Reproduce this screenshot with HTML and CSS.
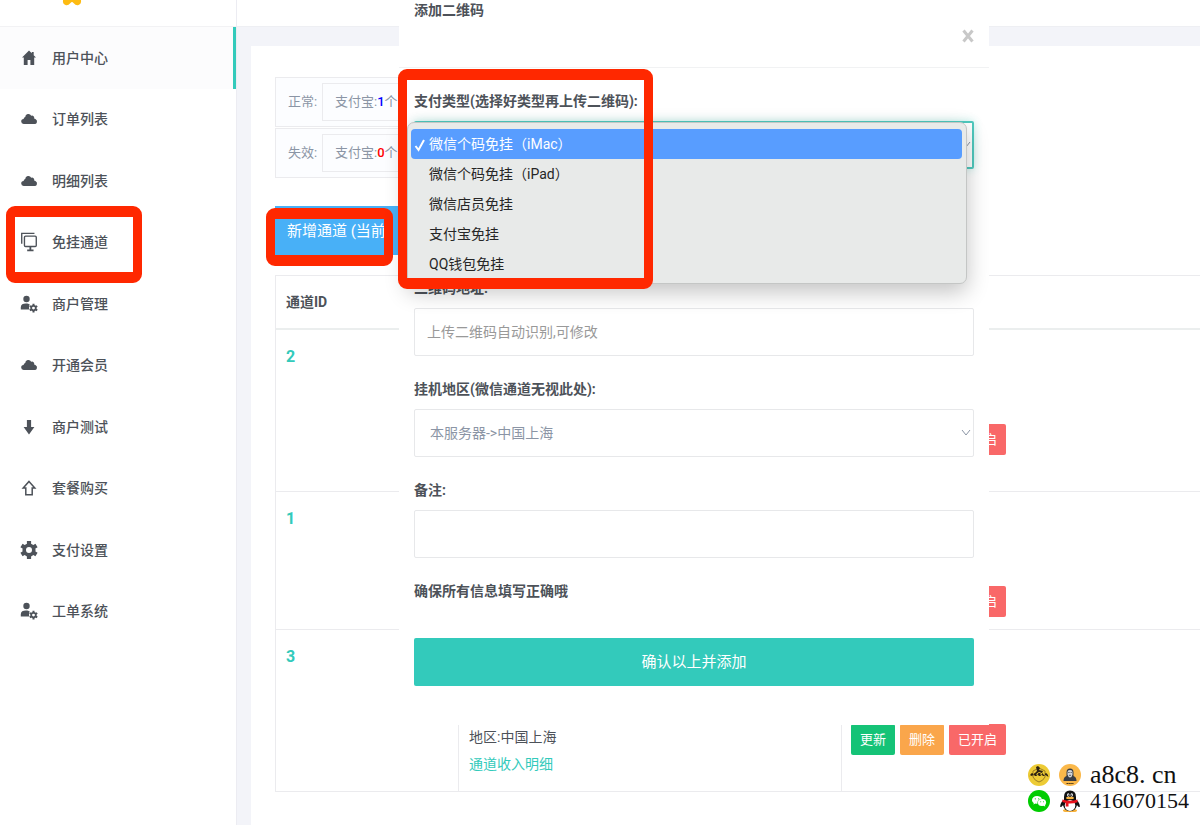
FILE: index.html
```html
<!DOCTYPE html>
<html lang="zh-CN">
<head>
<meta charset="utf-8">
<meta name="viewport" content="width=device-width, initial-scale=1">
<title>免挂通道</title>
<link rel="stylesheet" href="styles.css">
</head>
<body>
<svg class="defs" aria-hidden="true">
  <symbol id="cloud" viewBox="0 0 16 16"><path d="M2.800 13h10.600a2.500 2.500 0 0 0 1.300-4.700 2.200 2.200 0 0 0-1.600-.8 2.200 2.200 0 0 0-2.900-2.800A3.200 3.200 0 0 0 4.200 6 2.200 2.200 0 0 0 2.600 8 2.500 2.500 0 0 0 2.800 13z"/></symbol>
  <symbol id="users" viewBox="0 0 18 20"><circle cx="6.500" cy="5" r="3.200"/><path d="M.8 15.500v-2.300c0-2.600 2.200-3.700 5-3.700 1.900 0 3.300.4 4 1.100-.9 1.500-1 3.300-.4 4.900z"/><path d="M13.500 9.800v8.600M9.800 12l7.400 4.300M9.800 16.300l7.400-4.300" stroke="currentColor" stroke-width="2"/><circle cx="13.500" cy="14.100" r="2.300" fill="#fff" stroke="currentColor" stroke-width="1.700"/></symbol>
</svg>
<div class="app">
  <aside class="sidebar">
    <div class="brand">
      <svg width="20" height="6" viewBox="0 0 20 6" aria-hidden="true"><path d="M1 0h18q.6 4-2.500 5-2.500.8-5-2-.8-1-1.500-1t-1.500 1q-2.500 2.800-5 2Q.4 4 1 0z" fill="#fdbb12"/></svg>
    </div>
    <nav class="nav">
      <a class="nav-item nav-item--active" href="#"><svg class="icon" viewBox="0 0 16 16"><path d="M8 .4 1 7.600h1.800V15h3.800v-5h2.800v5h3.800V7.600H15l-2.300-2.400V2h-1.900v1.300z"/></svg>用户中心</a>
      <a class="nav-item" href="#"><svg class="icon"><use href="#cloud"/></svg>订单列表</a>
      <a class="nav-item" href="#"><svg class="icon"><use href="#cloud"/></svg>明细列表</a>
      <a class="nav-item" href="#"><svg class="icon icon--large" viewBox="0 0 18 22" fill="none" stroke="currentColor" stroke-width="1.500"><path d="M1 13V1.500h14"/><rect x="4" y="4.500" width="13" height="11.500" rx="1.200"/><path d="M10.500 16v4M7 20.300h7" stroke-width="2"/></svg>免挂通道<span class="marker marker--nav"></span></a>
      <a class="nav-item" href="#"><svg class="icon icon--large"><use href="#users"/></svg>商户管理</a>
      <a class="nav-item" href="#"><svg class="icon"><use href="#cloud"/></svg>开通会员</a>
      <a class="nav-item" href="#"><svg class="icon" viewBox="0 0 16 16"><path d="M5.900 1h4.200v7h3.300L8 15.500 2.600 8h3.300z"/></svg>商户测试</a>
      <a class="nav-item" href="#"><svg class="icon" viewBox="0 0 16 16" fill="none" stroke="currentColor" stroke-width="1.500"><path d="M8 1.500 13.800 8h-2.600v6.700H4.800V8H2.200z"/></svg>套餐购买</a>
      <a class="nav-item" href="#"><svg class="icon icon--large" viewBox="0 0 18 20"><path d="M9 1v18M1.500 5.500l15 9M1.500 14.500l15-9" stroke="currentColor" stroke-width="4.200"/><circle cx="9" cy="10" r="4.800" fill="#fff" stroke="currentColor" stroke-width="3.600"/></svg>支付设置</a>
      <a class="nav-item" href="#"><svg class="icon icon--large"><use href="#users"/></svg>工单系统</a>
    </nav>
  </aside>

  <div class="main">
    <header class="topbar"></header>
    <main class="card">
      <div class="stats">
        <div class="stat"><span class="stat-name">正常:</span><span class="stat-value">支付宝:<b class="count-ok">1</b>个</span></div>
        <div class="stat"><span class="stat-name">失效:</span><span class="stat-value">支付宝:<b class="count-bad">0</b>个</span></div>
      </div>
      <div class="toolbar">
        <button class="add-button" type="button">新增通道 (当前</button>
        <span class="marker marker--add"></span>
      </div>
      <table class="channels">
        <thead><tr><th class="col-id">通道ID</th><th class="col-info"></th><th></th></tr></thead>
        <tbody>
          <tr class="row-tall"><td class="id">2</td><td></td><td><div class="actions"><button class="chip chip--on" type="button">已开启</button></div></td></tr>
          <tr class="row-short"><td class="id">1</td><td></td><td><div class="actions"><button class="chip chip--on" type="button">已开启</button></div></td></tr>
          <tr class="row-tall"><td class="id">3</td><td><div class="info">地区:中国上海<br><a href="#">通道收入明细</a></div></td><td><div class="actions"><button class="chip chip--update" type="button">更新</button><button class="chip chip--delete" type="button">删除</button><button class="chip chip--on" type="button">已开启</button></div></td></tr>
        </tbody>
      </table>
    </main>
  </div>
</div>

<section class="modal" role="dialog" aria-labelledby="modal-title">
  <header class="modal-head">
    <h2 class="modal-title" id="modal-title">添加二维码</h2>
    <button class="close" type="button" aria-label="关闭"><svg width="12" height="14" viewBox="0 0 12 14"><path d="M1.500 1.500l9 11M10.500 1.500l-9 11" stroke="#c8c8c8" stroke-width="3"/></svg></button>
  </header>
  <form class="modal-body">
    <div class="field field--open">
      <label class="label" for="type">支付类型(选择好类型再上传二维码):</label>
      <div class="select-wrap">
        <select class="control control--focus" id="type">
          <option>微信个码免挂（iMac）</option>
          <option>微信个码免挂（iPad）</option>
          <option>微信店员免挂</option>
          <option>支付宝免挂</option>
          <option>QQ钱包免挂</option>
        </select>
        <svg class="chevron" viewBox="0 0 10 8"><path d="M1 1l4 5 4-5"/></svg>
        <ul class="menu" role="listbox" aria-label="支付类型">
          <li class="option option--selected" role="option" aria-selected="true"><svg class="check" viewBox="0 0 12 14"><path d="M1.500 8l3 4L10 2"/></svg>微信个码免挂（iMac）</li>
          <li class="option" role="option">微信个码免挂（iPad）</li>
          <li class="option" role="option">微信店员免挂</li>
          <li class="option" role="option">支付宝免挂</li>
          <li class="option" role="option">QQ钱包免挂</li>
        </ul>
      </div>
    </div>
    <div class="field">
      <label class="label" for="address">二维码地址:</label>
      <input class="control" id="address" type="text" placeholder="上传二维码自动识别,可修改">
    </div>
    <div class="field">
      <label class="label" for="region">挂机地区(微信通道无视此处):</label>
      <div class="select-wrap">
        <select class="control" id="region"><option>本服务器-&gt;中国上海</option></select>
        <svg class="chevron" viewBox="0 0 10 8"><path d="M1 1l4 5 4-5"/></svg>
      </div>
    </div>
    <div class="field">
      <label class="label" for="remark">备注:</label>
      <input class="control" id="remark" type="text">
    </div>
    <p class="label notice">确保所有信息填写正确哦</p>
    <button class="submit" type="button">确认以上并添加</button>
  </form>
  <span class="marker marker--type"></span>
</section>

<footer class="contact">
  <svg class="badge" viewBox="0 0 22 22" aria-hidden="true"><circle cx="11" cy="11" r="11" fill="#edcb35"/><path d="M5 7l6-3 6 3v6q-2 4-6 5-4-1-6-5z" fill="none" stroke="#997b24"/><path d="M8 3l2-1 2 2-1 2 4 1-1 2-3-1-3 2-1-1 2-2z" fill="#2d2213"/><path d="M1.500 13q1-4 3-4l1 2 1-2h2v3l2-3h2v3l2-3 2 3 1-3q2 0 3 4l-3-2-2 1-2-1-2 1-2-1-2 1-2-1-2 1-1-1z" fill="#2d2213"/></svg>
  <svg class="badge" viewBox="0 0 22 22" aria-hidden="true"><circle cx="11" cy="11" r="11" fill="#fab84a"/><path d="M4.500 17q0-4 3-5V8.500q0-4 3.500-4t3.500 4V12q3 1 3 5z" fill="#383c44"/><path d="M8.500 8q0-2 2.500-2t2.500 2v2.500q-.5 2.500-2.500 3-2-.5-2.500-3z" fill="#d2d5da"/><path d="M9.200 8.500h1.400m1 0h1.200M10 11.300h2" stroke="#383c44" stroke-width=".8"/><path d="M7.500 19.500h7" stroke="#473517" stroke-width="1.200" stroke-dasharray="1.500 .4"/></svg>
  <span class="site">a8c8. cn</span>
  <svg class="badge" viewBox="0 0 22 22" aria-hidden="true"><circle cx="11" cy="11" r="11" fill="#0c0"/><path d="M9 6c-2.900 0-5 1.700-5 4 0 1.300.7 2.300 1.800 3l-.4 1.600 2-1c.5.100 1 .2 1.600.2h.5c-.5-3 2-5 4.500-5C13.400 7.200 11.400 6 9 6z" fill="#fff"/><ellipse cx="14" cy="12.600" rx="4.100" ry="3.500" fill="#fff"/><path d="M15 15l2.200 1.800-.3-2.200z" fill="#fff"/><g fill="#0c0"><circle cx="7.300" cy="8.800" r=".6"/><circle cx="10.700" cy="8.800" r=".6"/><circle cx="12.700" cy="11.700" r=".5"/><circle cx="15.500" cy="11.700" r=".5"/></g></svg>
  <svg class="badge" viewBox="0 0 22 22" aria-hidden="true"><path d="M4.500 10Q1 13 1.200 17q1.300.5 2.300-1.500h15q1 2 2.300 1.500.2-4-3.300-7z" fill="#111"/><path d="M4 20q3-2 7 0 4-2 7 0 .5 2-3.500 2h-7Q3.500 22 4 20z" fill="#f8b33c"/><ellipse cx="11" cy="15" rx="6.800" ry="6.200" fill="#111"/><ellipse cx="11" cy="15.500" rx="5.300" ry="5.400" fill="#fff"/><path d="M5 10V7q0-6.500 6-6.500T17 7v3z" fill="#111"/><ellipse cx="9.300" cy="5" rx="1.200" ry="1.700" fill="#fff"/><ellipse cx="12.700" cy="5" rx="1.200" ry="1.700" fill="#fff"/><circle cx="9.600" cy="5.200" r=".6"/><circle cx="12.400" cy="5.200" r=".6"/><ellipse cx="11" cy="8" rx="4" ry="1.200" fill="#f8b33c"/><path d="M3.500 9.500q7.500 2.500 15 0v2.700q-4 1.500-9 1.200v3H6.700v-3.600q-2-.2-3.500-1z" fill="#e9131d"/></svg>
  <span class="number">416070154</span>
</footer>
</body>
</html>
```
FILE: styles.css
```css
* { box-sizing: border-box; }

body {
  margin: 0;
  overflow-x: hidden;
  background: #f3f4f9;
  color: #4d5259;
  font: 14px/24px Roboto, "Noto Sans CJK SC", sans-serif;
}

button, input, select { font: inherit; }
a { color: #33cabb; text-decoration: none; }

.defs { position: absolute; width: 0; height: 0; }

.app {
  display: grid;
  grid-template-columns: 237px minmax(0, 1fr);
  min-height: 100vh;
}

/* Sidebar */
.sidebar {
  background: #fff;
  border-right: 1px solid #ececf2;
}
.brand {
  display: flex;
  height: 27px;
  padding-left: 62px;
  border-bottom: 1px solid #f2f2f4;
}
.nav {
  display: flex;
  flex-direction: column;
  min-height: 615px;
}
.nav-item {
  position: relative;
  display: flex;
  flex: 1;
  align-items: center;
  gap: 14px;
  padding-left: 20px;
  color: #4d5259;
  font-weight: 500;
}
.nav-item--active {
  background: #fcfcfd;
  border-right: 3px solid #33cabb;
}
.icon {
  width: 18px;
  height: 16px;
  fill: currentColor;
}
.icon[fill="none"] { fill: none; }
.icon--large { height: 20px; }

/* Page content */
.main {
  display: flex;
  flex-direction: column;
}
.topbar {
  height: 27px;
  background: #fff;
  border-bottom: 1px solid #eeeff3;
}
.card {
  flex: 1;
  margin: 19px 0 0 14px;
  padding: 31px 0 24px 24px;
  background: #fff;
}
.stats {
  display: grid;
  gap: 1px;
  max-width: 420px;
}
.stat {
  display: flex;
  align-items: center;
  padding: 5px 0 5px 12px;
  border: 1px solid #ebebee;
  background: #fcfdff;
  color: #8b95a5;
  font-size: 13px;
}
.stat-name { width: 34px; }
.stat-value {
  flex: 1;
  padding: 6px 12px;
  border: 1px solid #ebebee;
}
.count-ok { color: #00f; font-weight: 500; }
.count-bad { color: #f00; font-weight: 500; }

.toolbar {
  position: relative;
  display: flex;
  margin: 28px 0 20px;
}
.add-button {
  width: 180px;
  height: 49px;
  padding: 0 12px;
  border: 0;
  background: #48b0f7;
  color: #fff;
  font-size: 15px;
  text-align: left;
}

.channels {
  width: 100%;
  table-layout: fixed;
  border-spacing: 0;
  border-top: 1px solid #ebebee;
  border-left: 1px solid #ebebee;
}
.channels th {
  height: 54px;
  padding: 0 10px;
  border-bottom: 2px solid #ebeeee;
  font-weight: 700;
  text-align: left;
}
.channels td {
  padding: 0 10px;
  border-bottom: 1px solid #ebebee;
  vertical-align: top;
}
.channels td + td { border-left: 1px solid #ebebee; }
.col-id { width: 182px; }
.col-info { width: 383px; }
.row-tall { height: 162px; }
.row-short { height: 138px; }
.channels .id {
  padding-top: 15px;
  color: #33cabb;
  font-size: 16px;
  font-weight: 700;
}
.info {
  padding-top: 94px;
  line-height: 27px;
}
.actions {
  display: flex;
  justify-content: flex-end;
  gap: 5px;
  width: 154px;
  padding-top: 94px;
}
.chip {
  height: 31px;
  padding: 0 9px;
  border: 0;
  border-radius: 2px;
  color: #fff;
  font-size: 13px;
  white-space: nowrap;
}
.chip--update { background: #15c377; }
.chip--delete { background: #faa64b; }
.chip--on { background: #f96868; }

/* Dialog */
.modal {
  position: absolute;
  top: 0;
  left: 399px;
  width: 590px;
  background: #fff;
}
.modal-head {
  display: flex;
  justify-content: space-between;
  align-items: flex-start;
  height: 68px;
  padding: 0 15px;
  border-bottom: 1px solid #f1f2f3;
}
.modal-title {
  margin: 0;
  font-size: 14px;
  font-weight: 700;
  line-height: 20px;
}
.close {
  display: flex;
  padding: 29px 0 0;
  border: 0;
  background: none;
}
.modal-body { padding: 21px 15px 39px; }
.field { margin-bottom: 21px; }
.field--open { margin-bottom: 107px; }
.label {
  display: block;
  margin: 0 0 8px;
  font-weight: 700;
}
.notice { margin-bottom: 35px; }
.control {
  display: block;
  width: 100%;
  height: 48px;
  padding: 0 12px;
  border: 1px solid #e7e8ea;
  border-radius: 2px;
  outline: 0;
  background: #fff;
  color: #8b95a5;
  appearance: none;
}
select.control { padding: 0 15px; }
.control::placeholder { color: #999; }
.control--focus {
  border: 2px solid #4fc9be;
  box-shadow: 0 0 8px #33cabb4d;
}
.select-wrap { position: relative; }
.chevron {
  position: absolute;
  top: 20px;
  right: 3px;
  width: 10px;
  height: 8px;
  fill: none;
  stroke: #8b95a5;
}
.submit {
  width: 100%;
  height: 48px;
  border: 0;
  border-radius: 2px;
  background: #33cabb;
  color: #fff;
  font-size: 15px;
}

.menu {
  position: absolute;
  top: 1px;
  left: -7px;
  right: 7px;
  margin: 0;
  padding: 6px 4px 4px 3px;
  border: 1px solid #c4c6c5;
  border-radius: 7px;
  background: #e8eae9;
  box-shadow: 0 8px 22px #0000003d;
  color: #262626;
  list-style: none;
}
.option {
  position: relative;
  height: 30px;
  padding-left: 18px;
  border-radius: 4px;
  line-height: 30px;
}
.option--selected {
  background: #589dff;
  color: #fff;
}
.check {
  position: absolute;
  top: 9px;
  left: 3px;
  width: 12px;
  height: 14px;
  fill: none;
  stroke: currentColor;
  stroke-width: 2;
}

/* Highlight frames drawn over the page */
.marker {
  position: absolute;
  border: solid #ff2800;
  border-width: 11px 9px;
  border-radius: 9px;
  pointer-events: none;
}
.marker--nav {
  inset: -6px 94px -10px 6px;
}
.marker--add {
  top: 2px;
  left: -9px;
  width: 127px;
  height: 58px;
}
.marker--type {
  top: 69px;
  left: -1px;
  width: 255px;
  height: 220px;
}

/* Contact badge */
.contact {
  position: absolute;
  top: 764px;
  right: 10px;
  display: grid;
  grid-template-columns: 22px 22px 100px;
  gap: 4px 9px;
  color: #111;
  font-family: "Liberation Serif", serif;
  line-height: 22px;
}
.badge { width: 22px; height: 22px; }
.site { font-size: 26px; }
.number { font-size: 22px; }
```
